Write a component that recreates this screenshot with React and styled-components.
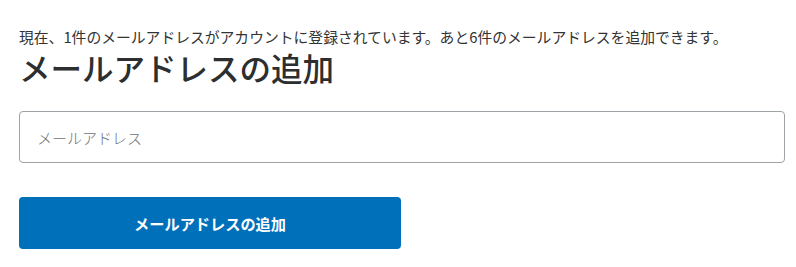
import React from "react";
import styled, { createGlobalStyle } from "styled-components";

const GlobalStyle = createGlobalStyle`
  html, body {
    margin: 0;
    padding: 0;
    background: #fff;
  }
  body {
    font-family: "Noto Sans CJK JP", "Noto Sans", sans-serif;
    color: #333;
  }
`;

const Page = styled.div`
  padding: 26px 12px 0 19px;
  display: flex;
  flex-direction: column;
`;

const Notice = styled.p`
  margin: 0;
  font-size: 14.8px;
  line-height: 21px;
  color: #333;
  white-space: nowrap;
`;

const Title = styled.h1`
  margin: 0;
  font-size: 31.5px;
  font-weight: 500;
  line-height: 40px;
  color: #2c2e2f;
`;

const Form = styled.form`
  margin-top: 24px;
  display: flex;
  flex-direction: column;
  gap: 34px;
`;

const EmailInput = styled.input`
  box-sizing: border-box;
  width: 766px;
  height: 52px;
  padding: 0 17px;
  border: 1px solid #9da3a6;
  border-radius: 4px;
  font-family: inherit;
  font-size: 15px;
  color: #333;
  outline: none;
  &::placeholder {
    color: #6c7378;
    font-weight: 300;
  }
`;

const SubmitButton = styled.button`
  box-sizing: border-box;
  width: 382px;
  height: 52px;
  border: none;
  border-radius: 4px;
  background: #0070ba;
  color: #fff;
  font-family: inherit;
  font-size: 15.2px;
  font-weight: 700;
  cursor: pointer;
`;

export default function App() {
  return (
    <>
      <GlobalStyle />
      <Page>
        <Notice>
          現在、1件のメールアドレスがアカウントに登録されています。あと6件のメールアドレスを追加できます。
        </Notice>
        <Title>メールアドレスの追加</Title>
        <Form onSubmit={(e) => e.preventDefault()}>
          <EmailInput type="email" placeholder="メールアドレス" />
          <SubmitButton type="submit">メールアドレスの追加</SubmitButton>
        </Form>
      </Page>
    </>
  );
}
